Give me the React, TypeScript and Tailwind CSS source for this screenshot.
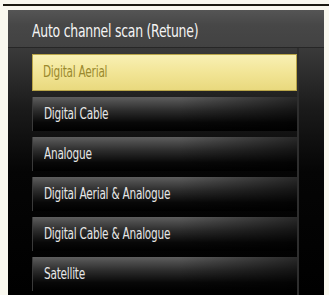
import React from "react";

const items = [
  "Digital Cable",
  "Analogue",
  "Digital Aerial & Analogue",
  "Digital Cable & Analogue",
  "Satellite",
];

const font = { fontFamily: '"DejaVu Sans Condensed", "Liberation Sans", sans-serif' };

export default function App() {
  return (
    <div className="w-[329px] h-[295px] bg-[#f9f8ef] overflow-hidden flex flex-col" style={font}>
      <div className="mt-[4px] ml-[3px] h-[2px] bg-[#1c1a12]" />
      <div className="mt-[4px] ml-[8px] w-[316px] flex-1 flex flex-col bg-black">
        <div className="h-[38px] shrink-0 bg-[linear-gradient(to_bottom,#555555,#474747_40%,#424242)] border-b border-[#262626] flex items-center pl-[24px] pt-[6px]">
          <span className="inline-block origin-left scale-x-[0.79] whitespace-nowrap text-[#f4f4f4] text-[17.5px] tracking-[-0.3px] leading-none">
            Auto channel scan (Retune)
          </span>
        </div>
        <div className="flex-1 flex bg-[linear-gradient(to_bottom,#3a3a3a,#1a1a1a_25%,#050505_50%,#000)]">
          <div className="w-[24px] shrink-0" />
          <div className="w-[265px] shrink-0 flex flex-col pt-[6px] gap-[6px]">
            <div className="h-[37px] shrink-0 border border-[#b9a548] bg-[linear-gradient(to_bottom,#f8f0b4,#f2e596_50%,#e9d97e)] flex items-center pl-[10px]">
              <span className="inline-block origin-left scale-x-[0.78] whitespace-nowrap text-[#9b8a2e] text-[15px] tracking-[-0.3px] leading-none">Digital Aerial</span>
            </div>
            {items.map((t) => (
              <div
                key={t}
                className="h-[34px] shrink-0 bg-[linear-gradient(to_right,rgba(0,0,0,0)_55%,rgba(0,0,0,0.55)),linear-gradient(to_bottom,#5e5e5e,#2c2c2c_40%,#080808_75%,#000)] border-l border-[#3a3a3a] flex items-center pl-[11px]"
              >
                <span className="inline-block origin-left scale-x-[0.78] whitespace-nowrap text-[#e6e6e6] text-[15px] tracking-[-0.3px] leading-none">{t}</span>
              </div>
            ))}
          </div>
          <div className="flex-1 border-l-[2px] border-[#2e2e2e]" />
        </div>
      </div>
    </div>
  );
}
